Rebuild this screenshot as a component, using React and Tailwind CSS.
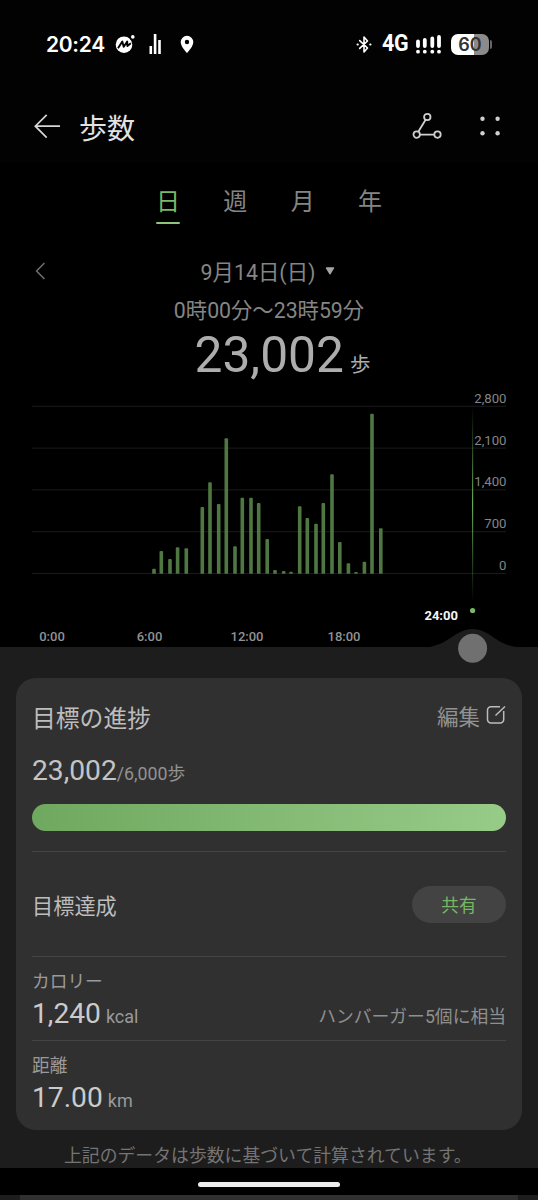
import React from "react";

const BARS = [
  [154, 568.7], [161.3, 551], [170, 559], [177.6, 547.3], [186.3, 548.3],
  [202.3, 507], [210, 482.3], [218.7, 504], [226.3, 438.3], [235, 546.3],
  [242.3, 497.7], [251, 497.7], [258.7, 503], [267.2, 539], [275, 570],
  [283.7, 571], [291, 571.7], [299.7, 506.3], [307.3, 518], [316, 523.7],
  [323.3, 503], [332, 474.3], [339.8, 542], [348.4, 563.3], [356, 572],
  [364.4, 561.7], [372, 413.7], [380.8, 528.3],
];

const GRID = [
  [406.3, "2,800"], [448.1, "2,100"], [489.9, "1,400"], [531.7, "700"], [573.5, "0"],
];

const HOURS = [[52, "0:00"], [149.5, "6:00"], [247, "12:00"], [344, "18:00"]];

function StatusBar() {
  return (
    <div className="flex h-[88px] items-center bg-[#020202] pl-[46px] pr-[46px] text-white">
      <span className="w-[58px] whitespace-nowrap font-['Inter'] text-[21px] font-semibold leading-none tracking-[-0.3px]">20:24</span>
      <svg className="ml-[11px]" width="21" height="20" viewBox="0 0 21 20">
        <circle cx="9" cy="10.7" r="8.3" fill="#fff" />
        <path d="M3 14.2 7.3 7.6 8.7 12.8 12.2 7.6 12.4 12 15.8 9.2" fill="none" stroke="#020202" strokeWidth="1.9" strokeLinejoin="round" />
        <circle cx="17.8" cy="3" r="3.4" fill="#020202" />
        <circle cx="17.8" cy="2.9" r="1.8" fill="#fff" />
      </svg>
      <svg className="ml-[13px]" width="13" height="20" viewBox="0 0 13 20" fill="#fff">
        <path d="M.5 12h2.600v8H.5zM4.800 0h2.600v20H4.800zM9.200 6h2.600v14H9.200z" />
      </svg>
      <svg className="ml-[18px]" width="14" height="19" viewBox="0 0 14 19">
        <path fillRule="evenodd" d="M7 .8a6.3 6.3 0 0 0-6.3 6.3C.7 11.2 5 15.7 7 18.2c2-2.5 6.3-7 6.3-11.1A6.3 6.3 0 0 0 7 .8Zm0 4a2.2 2.2 0 1 1 0 4.4 2.2 2.2 0 0 1 0-4.4Z" fill="#fff" />
      </svg>
      <svg className="ml-auto" width="16" height="19" viewBox="0 0 16 19" fill="none" stroke="#fff" strokeWidth="1.6" strokeLinejoin="round" strokeLinecap="round">
        <path d="M3.7 5.6 11.5 13 8 17V2l3.5 4L3.7 13.4" />
        <path d="M1.5 9.5h.3M14.2 9.5h.3" strokeWidth="2" />
      </svg>
      <span className="ml-[10px] w-[25px] origin-left scale-x-[0.91] font-['Roboto'] text-[23.500px] font-bold leading-none tracking-[-0.3px]">4G</span>
      <svg className="ml-[9px]" width="25" height="19" viewBox="0 0 25 19" stroke="#fff" strokeWidth="3.8" strokeLinecap="round">
        <path d="M2 6.5v4.5M8.8 5v6M16.3 3.5v7.5M23 2v9" />
        <path d="M2 16.6v.1M8.8 16.6v.1M16.3 16.6v.1M23 16.6v.1" />
      </svg>
      <div className="ml-[10px] flex h-[21px] w-[38px] shrink-0 items-center justify-center rounded-[7px] bg-linear-to-r from-white from-61% to-[#8b8b8b] to-61%">
        <span className="pt-[1px] font-['Inter'] text-[18px] font-semibold leading-none text-[#333]">60</span>
      </div>
      <div className="ml-[1px] h-[9px] w-[2px] shrink-0 rounded-r-sm bg-[#666]" />
    </div>
  );
}

function Header() {
  return (
    <header className="flex h-[75px] items-center bg-[#020202] pl-[34px] pr-[36px]">
      <svg width="27" height="26" viewBox="0 0 27 26" fill="none" stroke="#d6d6d6" strokeWidth="1.7">
        <path d="M26 13.2H1.5M12.7 1.8 1.3 13.2l11.4 11.4" />
      </svg>
      <h1 className="ml-[18px] pt-[8px] text-[28px] leading-none text-[#e2e2e2]">歩数</h1>
      <svg className="ml-auto" width="30" height="28" viewBox="0 0 30 28" fill="none" stroke="#cfcfcf" strokeWidth="1.8">
        <circle cx="15.3" cy="5" r="3.2" />
        <circle cx="4.7" cy="22.6" r="3.2" />
        <circle cx="25.5" cy="22.6" r="3.2" />
        <path d="M13.6 7.8 6.3 19.8M8 22.7h14.2" />
      </svg>
      <svg className="ml-[37px]" width="23" height="22" viewBox="0 0 23 22" fill="#cfcfcf">
        <circle cx="3.5" cy="3.8" r="2.2" /><circle cx="18.6" cy="3.8" r="2.2" />
        <circle cx="3.5" cy="18.2" r="2.2" /><circle cx="18.6" cy="18.2" r="2.2" />
      </svg>
    </header>
  );
}

function Tabs() {
  return (
    <nav className="flex h-[62px] justify-center gap-[43.3px] pt-[27px] text-[24px] leading-none text-[#858585]">
      <span className="flex h-[34px] flex-col items-center justify-between text-[#7bb868]">
        日<i className="h-[2px] w-[24px] shrink-0 rounded-full bg-[#8cc57b]" />
      </span>
      <span>週</span>
      <span>月</span>
      <span>年</span>
    </nav>
  );
}

function Summary() {
  return (
    <section className="h-[165px] pt-[33px] text-[#858585]">
      <div className="flex h-[26px] items-center pl-[35px]">
        <svg width="11" height="18" viewBox="0 0 11 18" fill="none" stroke="#707070" strokeWidth="1.5">
          <path d="M9.4 1 1.6 9l7.8 8" />
        </svg>
        <span className="ml-[154.500px] pt-[3px] text-[21.400px] leading-none">9月14日(日)</span>
        <svg className="ml-[9px] mb-[1px]" width="10" height="8" viewBox="0 0 10 8">
          <path d="M1.4 1h7.2L5 6.8Z" fill="#a5a5a5" stroke="#a5a5a5" strokeWidth="1.3" strokeLinejoin="round" />
        </svg>
      </div>
      <p className="mt-[16px] text-center text-[21.3px] leading-none">0時00分〜23時59分</p>
      <p className="flex items-baseline pl-[194.500px] pt-[4px] text-[#adadad]">
        <span className="text-[49.700px] leading-[60px]">23,002</span>
        <span className="ml-[6px] text-[20.500px] leading-none">歩</span>
      </p>
    </section>
  );
}

function Chart() {
  return (
    <svg className="relative z-10 block overflow-visible" width="538" height="257" viewBox="0 390 538 257">
      <defs>
        <linearGradient id="cursor" x1="0" x2="0" y1="0" y2="1">
          <stop offset="0" stopColor="#62a050" stopOpacity="0" />
          <stop offset=".5" stopColor="#6aaa58" />
          <stop offset="1" stopColor="#62a050" stopOpacity="0" />
        </linearGradient>
      </defs>
      {GRID.map(([y, label]) => (
        <g key={label}>
          <path d={`M32 ${y}H506`} stroke="#1b1b1b" />
          <text x="506.5" y={y - 3.5} textAnchor="end" fontSize="13.2" fill="#858585">{label}</text>
        </g>
      ))}
      {BARS.map(([x, y]) => (
        <path
          key={x}
          d={`M${x - 1.8} 573.8V${y + 1}q0-1 1-1h1.6q1 0 1 1V573.8Z`}
          fill="#4f7741"
        />
      ))}
      <rect x="472" y="406" width="1.2" height="196" fill="url(#cursor)" />
      <circle cx="472.6" cy="610.5" r="2.6" fill="#78b966" />
      {HOURS.map(([x, label]) => (
        <text key={label} x={x} y="641" textAnchor="middle" fontSize="13" fontWeight="500" fill="#929292">{label}</text>
      ))}
      <text x="441.200" y="619.5" textAnchor="middle" fontSize="13" fontWeight="700" fill="#f5f5f5">24:00</text>
      <path d="M422 647.5C448 647.5 454 629 472.500 629S497 647.5 523 647.5Z" fill="#1d1d1d" />
      <circle cx="472.6" cy="648.3" r="14.500" fill="#707070" />
    </svg>
  );
}

function Metric({ name, value, unit, note }) {
  return (
    <div className="flex h-[84px] flex-col border-t border-[#454545] pt-[16px]">
      <span className="text-[17.700px] leading-[18px] text-[#9a9a9a]">{name}</span>
      <div className="mt-[3px] flex items-baseline leading-[40px]">
        <span className="text-[28.200px] text-[#cbcbcb]">{value}</span>
        <span className="ml-[5px] text-[18px] text-[#9a9a9a]">{unit}</span>
        <span className="ml-auto text-[17.800px] text-[#8f8f8f]">{note}</span>
      </div>
    </div>
  );
}

function GoalCard() {
  return (
    <section className="h-[452px] overflow-hidden rounded-[20px] bg-[#303030] px-[16px]">
      <div className="flex h-[80px] items-center justify-between">
        <h2 className="pt-[4px] text-[23.800px] leading-none text-[#bdbdbd]">目標の進捗</h2>
        <span className="flex items-center gap-[6px] text-[21.500px] leading-none text-[#929292]">
          編集
          <svg className="mb-[6px]" width="20" height="20" viewBox="0 0 20 20" fill="none" stroke="#bcbcbc" strokeWidth="1.5">
            <path d="M14 1.800H5A3.500 3.500 0 0 0 1.500 5.300v9.200A3.500 3.500 0 0 0 5 18h9.200a3.500 3.500 0 0 0 3.500-3.500V6" />
            <path d="M19 1.500 9.500 10.500" />
          </svg>
        </span>
      </div>
      <p className="flex h-[46px] items-baseline pt-px leading-[24px]">
        <span className="text-[28.200px] text-[#c4c4c4]">23,002</span>
        <span className="text-[17.800px] text-[#929292]">/6,000歩</span>
      </p>
      <div className="h-[27px] rounded-full bg-linear-to-r from-[#6fa85f] to-[#97cb88]" />
      <div className="mt-[20px] flex h-[105px] items-center justify-between border-t border-[#454545]">
        <span className="pt-[5px] text-[21.200px] leading-none text-[#bdbdbd]">目標達成</span>
        <button className="h-[37px] w-[94px] rounded-full bg-[#434343] pt-[5px] text-[17.700px] leading-none text-[#74b862]">共有</button>
      </div>
      <Metric name="カロリー" value="1,240" unit="kcal" note="ハンバーガー5個に相当" />
      <Metric name="距離" value="17.00" unit="km" />
    </section>
  );
}

export default function App() {
  return (
    <main className="flex h-[1200px] w-[538px] flex-col overflow-hidden bg-black font-['Roboto','Noto_Sans_CJK_JP',sans-serif]" lang="ja">
      <StatusBar />
      <Header />
      <Tabs />
      <Summary />
      <Chart />
      <div className="h-[521px] bg-[#1d1d1d] px-[16px] pt-[31px]">
        <GoalCard />
        <p className="mt-[17px] whitespace-nowrap pl-[48px] text-[17.850px] leading-[18px] text-[#747474]">上記のデータは歩数に基づいて計算されています。</p>
      </div>
      <div className="flex h-[27px] items-center justify-center bg-black pt-[5px]">
        <div className="h-[5px] w-[142px] rounded-full bg-[#ececec]" />
      </div>
      <div className="h-[5px] bg-[#1d1d1d] px-[20px]">
        <div className="h-full bg-[#303030]" />
      </div>
    </main>
  );
}
